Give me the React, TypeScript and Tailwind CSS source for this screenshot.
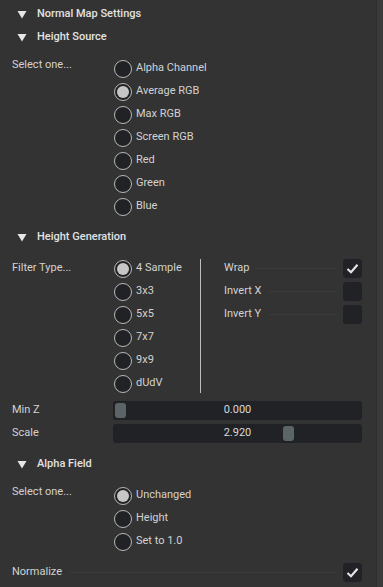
import React from "react";

const Tri = () => (
  <svg width="10" height="9" viewBox="0 0 10 9" className="shrink-0">
    <polygon points="0.5,1 9.5,1 5,8.5" fill="#e6e6e6" />
  </svg>
);

const Header = ({ title }: { title: string }) => (
  <div className="flex items-center h-[23px] pl-[17px] gap-[10px]">
    <Tri />
    <span className="text-[11px] font-medium text-[#e2e2e2]">{title}</span>
  </div>
);

const Radio = ({ label, on }: { label: string; on?: boolean }) => (
  <div className="flex items-center h-[23px] gap-[4px]">
    <div className="w-[18px] h-[18px] rounded-full border-[1.5px] border-[#b8b8b8] bg-[#212226] flex items-center justify-center shrink-0">
      {on && <div className="w-[12px] h-[12px] rounded-full bg-[#c6c6c6]" />}
    </div>
    <span className="text-[11px] text-[#d2d2d2]">{label}</span>
  </div>
);

const Check = ({ on }: { on?: boolean }) => (
  <div className="w-[19px] h-[19px] rounded-[3px] bg-[#212226] flex items-center justify-center shrink-0">
    {on && (
      <svg width="13" height="11" viewBox="0 0 13 11">
        <path d="M1.5 6 L5 9.2 L11.5 1.8" stroke="#e4e4e4" strokeWidth="2.2" fill="none" />
      </svg>
    )}
  </div>
);

const CheckRow = ({ label, on }: { label: string; on?: boolean }) => (
  <div className="flex items-center h-[23px]">
    <span className="text-[11px] text-[#d2d2d2] shrink-0">{label}</span>
    <div className="flex-1 h-px bg-[#3b3b3b] ml-[8px] mr-[7px]" />
    <Check on={on} />
  </div>
);

const Slider = ({ label, value, pos }: { label: string; value: string; pos: number }) => (
  <div className="flex items-center h-[19px]">
    <span className="w-[113px] pl-[12px] text-[11px] text-[#d2d2d2] shrink-0">{label}</span>
    <div className="relative flex-1 h-[19px] rounded-[3px] bg-[#212226] flex items-center justify-center">
      <span className="text-[11px] text-[#d8d8d8]">{value}</span>
      <div
        className="absolute top-[2px] w-[11px] h-[15px] rounded-[3px] bg-[#5b6568]"
        style={{ left: pos }}
      />
    </div>
  </div>
);

export default function App() {
  return (
    <div
      className="w-[383px] h-[587px] bg-[#333333] flex overflow-hidden"
      style={{ fontFamily: "Roboto, 'Noto Sans', sans-serif" }}
    >
      <div className="w-[376px] pt-[3px] pr-[14px] shrink-0">
        <Header title="Normal Map Settings" />
        <Header title="Height Source" />
        <div className="flex mt-[8px]">
          <div className="w-[114px] pl-[12px] text-[11px] text-[#d2d2d2] shrink-0">Select one...</div>
          <div className="flex flex-col">
            {["Alpha Channel", "Average RGB", "Max RGB", "Screen RGB", "Red", "Green", "Blue"].map((l) => (
              <Radio key={l} label={l} on={l === "Average RGB"} />
            ))}
          </div>
        </div>
        <div className="mt-[8px]">
          <Header title="Height Generation" />
        </div>
        <div className="flex mt-[8px]">
          <div className="w-[114px] pl-[12px] pt-[3px] text-[11px] text-[#d2d2d2] shrink-0">Filter Type...</div>
          <div className="flex flex-col w-[86px] shrink-0">
            {["4 Sample", "3x3", "5x5", "7x7", "9x9", "dUdV"].map((l) => (
              <Radio key={l} label={l} on={l === "4 Sample"} />
            ))}
          </div>
          <div className="w-px bg-[#bdbdbd] shrink-0 my-[2px]" />
          <div className="flex-1 flex flex-col pl-[23px]">
            <CheckRow label="Wrap" on />
            <CheckRow label="Invert X" />
            <CheckRow label="Invert Y" />
          </div>
        </div>
        <div className="flex flex-col gap-[4px] mt-[6px]">
          <Slider label="Min Z" value="0.000" pos={2} />
          <Slider label="Scale" value="2.920" pos={170} />
        </div>
        <div className="mt-[10px]">
          <Header title="Alpha Field" />
        </div>
        <div className="flex mt-[8px]">
          <div className="w-[114px] pl-[12px] text-[11px] text-[#d2d2d2] shrink-0">Select one...</div>
          <div className="flex flex-col">
            {["Unchanged", "Height", "Set to 1.0"].map((l) => (
              <Radio key={l} label={l} on={l === "Unchanged"} />
            ))}
          </div>
        </div>
        <div className="pl-[12px] mt-[8px]">
          <CheckRow label="Normalize" on />
        </div>
      </div>
      <div className="w-[7px] h-full bg-[#3b3b3b] border-l border-[#2e2e2e] shrink-0" />
    </div>
  );
}
